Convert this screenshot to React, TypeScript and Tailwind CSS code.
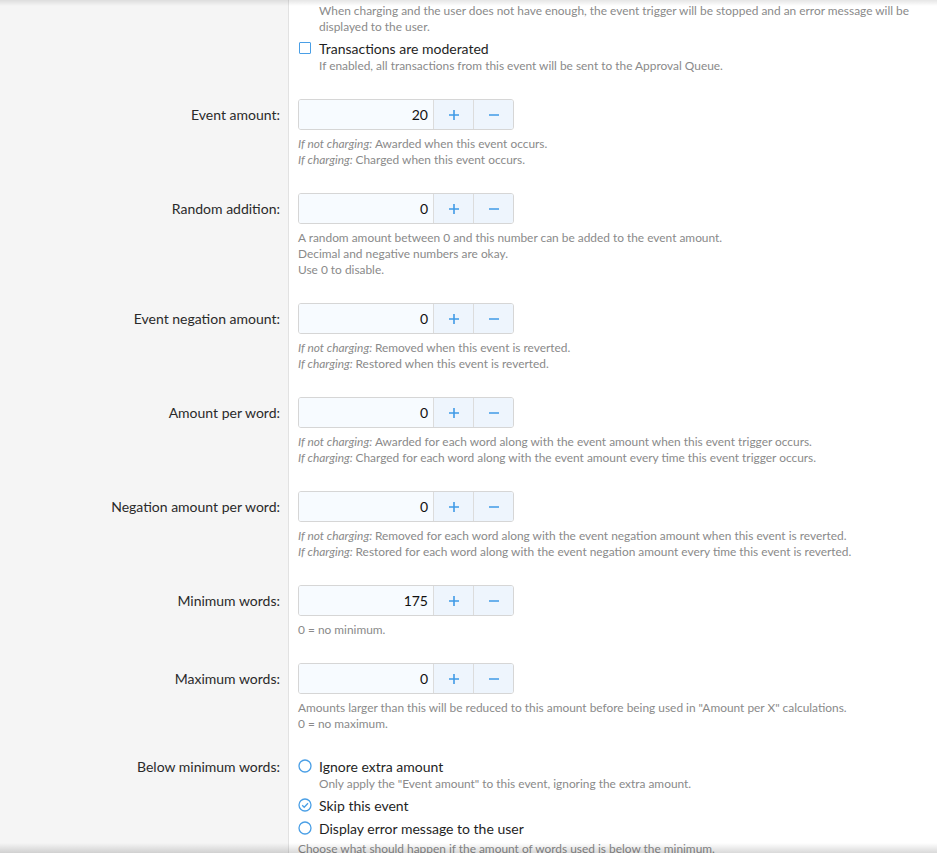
import React from "react";

type Line = { em?: string; text: string };

const font = { fontFamily: "Lato, 'Liberation Sans', sans-serif" };

const Spinner: React.FC<{ value: string }> = ({ value }) => (
  <div className="flex h-[31px] w-[216px] rounded-[3px] border border-[#d6d6d6] overflow-hidden">
    <div className="flex-1 bg-[#f7fbff] flex items-center justify-end pr-[5px] text-[14px] text-[#111]">
      {value}
    </div>
    <div className="w-[40px] border-l border-[#dcdcdc] bg-[#eef5fd] flex items-center justify-center">
      <svg width="12" height="12" viewBox="0 0 12 12">
        <path d="M6 1v10M1 6h10" stroke="#3f9ae6" strokeWidth="1.6" />
      </svg>
    </div>
    <div className="w-[40px] border-l border-[#dcdcdc] bg-[#eef5fd] flex items-center justify-center">
      <svg width="12" height="12" viewBox="0 0 12 12">
        <path d="M1 6h10" stroke="#3f9ae6" strokeWidth="1.6" />
      </svg>
    </div>
  </div>
);

const Help: React.FC<{ lines: Line[] }> = ({ lines }) => (
  <div className="mt-[6px] text-[11.9px] leading-[16px] text-[#8a8a8a]">
    {lines.map((l, i) => (
      <div key={i}>
        {l.em && <em>{l.em} </em>}
        {l.text}
      </div>
    ))}
  </div>
);

const Row: React.FC<{ label?: string; labelPad?: string; children: React.ReactNode }> = ({
  label,
  labelPad = "pt-[6px]",
  children,
}) => (
  <div className="flex">
    <div className="w-[289px] shrink-0 bg-[#f5f5f5] border-r border-[#e2e2e2] pr-[8px] pb-[25px] text-right">
      {label && <div className={`${labelPad} text-[14px] leading-[20px] text-[#2a2a2a]`}>{label}</div>}
    </div>
    <div className="flex-1 bg-white pl-[9px] pb-[25px]">{children}</div>
  </div>
);

const Radio: React.FC<{ checked?: boolean }> = ({ checked }) => (
  <svg width="14" height="14" viewBox="0 0 14 14" className="shrink-0">
    <circle cx="7" cy="7" r="6" fill="white" stroke="#4a9fe6" strokeWidth="1.3" />
    {checked && <path d="M4.2 7.2l2 2 3.8-4" fill="none" stroke="#4a9fe6" strokeWidth="1.3" />}
  </svg>
);

const fields: { label: string; value: string; help: Line[] }[] = [
  {
    label: "Event amount:",
    value: "20",
    help: [
      { em: "If not charging:", text: "Awarded when this event occurs." },
      { em: "If charging:", text: "Charged when this event occurs." },
    ],
  },
  {
    label: "Random addition:",
    value: "0",
    help: [
      { text: "A random amount between 0 and this number can be added to the event amount." },
      { text: "Decimal and negative numbers are okay." },
      { text: "Use 0 to disable." },
    ],
  },
  {
    label: "Event negation amount:",
    value: "0",
    help: [
      { em: "If not charging:", text: "Removed when this event is reverted." },
      { em: "If charging:", text: "Restored when this event is reverted." },
    ],
  },
  {
    label: "Amount per word:",
    value: "0",
    help: [
      { em: "If not charging:", text: "Awarded for each word along with the event amount when this event trigger occurs." },
      { em: "If charging:", text: "Charged for each word along with the event amount every time this event trigger occurs." },
    ],
  },
  {
    label: "Negation amount per word:",
    value: "0",
    help: [
      { em: "If not charging:", text: "Removed for each word along with the event negation amount when this event is reverted." },
      { em: "If charging:", text: "Restored for each word along with the event negation amount every time this event is reverted." },
    ],
  },
  {
    label: "Minimum words:",
    value: "175",
    help: [{ text: "0 = no minimum." }],
  },
  {
    label: "Maximum words:",
    value: "0",
    help: [
      { text: 'Amounts larger than this will be reduced to this amount before being used in "Amount per X" calculations.' },
      { text: "0 = no maximum." },
    ],
  },
];

const App: React.FC = () => {
  return (
    <div className="relative h-[853px] overflow-hidden bg-white" style={font}>
      {/* top of the form, scrolled partly out of view */}
      <Row>
        <div className="pt-[3px] pl-[21px] text-[11.9px] leading-[16px] text-[#8a8a8a]">
          <div className="whitespace-nowrap">
            When charging and the user does not have enough, the event trigger will be stopped and an error message will be
          </div>
          <div>displayed to the user.</div>
        </div>
        <div className="mt-[3px] flex items-center gap-[8px] h-[20px]">
          <div className="ml-[1px] w-[12px] h-[12px] border border-[#4a9fe6] rounded-[1px] bg-white" />
          <span className="text-[14px] text-[#1f1f1f]">Transactions are moderated</span>
        </div>
        <div className="pl-[21px] text-[11.9px] leading-[16px] text-[#8a8a8a]">
          If enabled, all transactions from this event will be sent to the Approval Queue.
        </div>
      </Row>

      {fields.map((f) => (
        <Row key={f.label} label={f.label}>
          <Spinner value={f.value} />
          <Help lines={f.help} />
        </Row>
      ))}

      <Row label="Below minimum words:" labelPad="pt-0">
        <div className="-mt-[1px] flex flex-col gap-[3px]">
          <div>
            <div className="flex items-center gap-[7px] h-[20px]">
              <Radio />
              <span className="text-[14px] text-[#1f1f1f]">Ignore extra amount</span>
            </div>
            <div className="pl-[21px] text-[11.9px] leading-[16px] text-[#8a8a8a]">
              Only apply the "Event amount" to this event, ignoring the extra amount.
            </div>
          </div>
          <div className="flex items-center gap-[7px] h-[20px]">
            <Radio checked />
            <span className="text-[14px] text-[#1f1f1f]">Skip this event</span>
          </div>
          <div className="flex items-center gap-[7px] h-[20px]">
            <Radio />
            <span className="text-[14px] text-[#1f1f1f]">Display error message to the user</span>
          </div>
          <div className="text-[11.9px] leading-[16px] text-[#8a8a8a]">
            Choose what should happen if the amount of words used is below the minimum.
          </div>
        </div>
      </Row>

      {/* scroll shadows */}
      <div className="pointer-events-none absolute inset-x-0 top-0 h-[6px] bg-gradient-to-b from-black/10 to-transparent" />
      <div className="pointer-events-none absolute inset-x-0 bottom-0 h-[10px] bg-gradient-to-t from-black/15 to-transparent" />
    </div>
  );
};

export default App;
